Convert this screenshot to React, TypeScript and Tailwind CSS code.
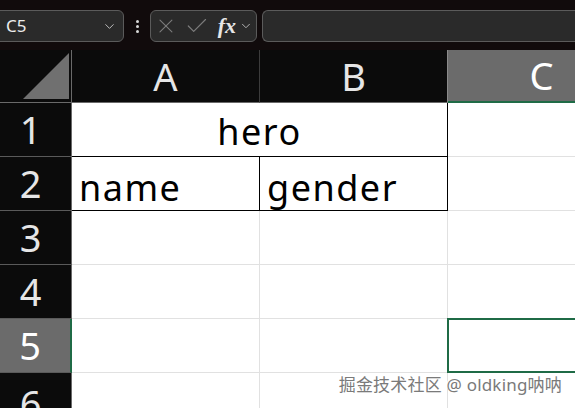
import { X, Check, ChevronDown } from 'lucide-react'

const rows = [1, 2, 3, 4, 5, 6]

function Toolbar() {
  return (
    <div className="h-[50px] bg-[#110b0c] flex items-start pt-[10px] overflow-hidden">
      {/* Name box */}
      <div className="-ml-2 w-[132px] h-[32px] shrink-0 rounded-md border border-[#5b5b5b] bg-[#2a2a2a] flex items-center justify-between pl-[13px] pr-[6px]">
        <span className="text-[17px] text-[#ececec]" style={{ fontFamily: '"Noto Sans", sans-serif' }}>C5</span>
        <ChevronDown size={15} strokeWidth={1.5} className="text-[#c4c4c4]" />
      </div>

      <div className="w-[26px] h-[32px] shrink-0 flex flex-col items-center justify-center gap-[2px]">
        <span className="w-[3px] h-[3px] rounded-full bg-[#d8d8d8]" />
        <span className="w-[3px] h-[3px] rounded-full bg-[#d8d8d8]" />
        <span className="w-[3px] h-[3px] rounded-full bg-[#d8d8d8]" />
      </div>

      {/* Formula buttons */}
      <div className="w-[107px] h-[32px] shrink-0 rounded-md border border-[#5b5b5b] bg-[#2a2a2a] flex items-center pl-[3px] pr-[3px]">
        <X size={24} strokeWidth={1.1} className="text-[#7c7c7c]" />
        <Check size={26} strokeWidth={1.1} className="text-[#7c7c7c] ml-[6px]" />
        <span className="ml-[8px] text-[22px] italic font-bold text-[#e6e6e6] leading-none" style={{ fontFamily: '"Liberation Serif", serif' }}>fx</span>
        <ChevronDown size={14} strokeWidth={1.5} className="text-[#c4c4c4] ml-[3px]" />
      </div>

      {/* Formula input */}
      <div className="ml-[5px] flex-1 h-[32px] rounded-l-md border border-r-0 border-[#5b5b5b] bg-[#2a2a2a] -mr-2" />
    </div>
  )
}

function Grid() {
  const head = '"Noto Sans", sans-serif'
  const cellText = 'text-[36px] tracking-[1.5px] text-black leading-none'
  return (
    <div
      className="grid grid-cols-[72px_188px_188px_1fr] grid-rows-[53px_54px_54px_54px_54px_54px_54px] bg-white"
      style={{ fontFamily: head }}
    >
      {/* corner */}
      <div className="bg-[#0b0b0b] border-r border-b border-[#6a6a6a] relative">
        <svg width="72" height="53" className="absolute inset-0">
          <polygon points="23,49 69,49 69,3" fill="#707070" />
        </svg>
      </div>
      <div className="bg-[#0b0b0b] border-r border-[#3c3c3c] border-b border-b-[#6a6a6a] flex items-center justify-center text-[38px] text-[#e6e6e6]">A</div>
      <div className="bg-[#0b0b0b] border-r border-[#8a8a8a] border-b border-b-[#6a6a6a] flex items-center justify-center text-[38px] text-[#e6e6e6]">B</div>
      <div className="bg-[#6b6b6b] border-b-2 border-[#1f6b46] flex items-center justify-center pl-[60px] text-[38px] text-white">C</div>

      {rows.map(r => {
        const sel = r === 5
        const rowHead = (
          <div
            key={`h${r}`}
            className={`${sel ? 'bg-[#6b6b6b] border-r-2 border-r-[#1f6b46] text-white' : 'bg-[#0b0b0b] border-r border-r-[#6a6a6a] text-[#e6e6e6]'} border-b border-b-[#5a5a5a] flex justify-center pr-[10px] text-[38px] ${r === 6 ? 'items-start pt-[2px]' : 'items-center'}`}
          >
            {r}
          </div>
        )
        if (r === 1) {
          return [
            rowHead,
            <div key="hero" className={`col-span-2 border-r border-b border-black flex items-center justify-center pt-[4px] ${cellText}`}>hero</div>,
            <div key="c1" className="border-b border-[#e1e1e1]" />,
          ]
        }
        if (r === 2) {
          return [
            rowHead,
            <div key="a2" className={`border-r border-b border-black flex items-end pl-[7px] pb-[4px] ${cellText}`}>name</div>,
            <div key="b2" className={`border-r border-b border-black flex items-end pl-[7px] pb-[4px] ${cellText}`}>gender</div>,
            <div key="c2" className="border-b border-[#e1e1e1]" />,
          ]
        }
        return [
          rowHead,
          <div key={`a${r}`} className="border-r border-b border-[#e1e1e1]" />,
          <div key={`b${r}`} className="border-r border-b border-[#e1e1e1]" />,
          <div key={`c${r}`} className="border-b border-[#e1e1e1] relative">
            {sel && <div className="absolute -left-px -top-px -right-2 -bottom-px border-2 border-[#1f6b46]" />}
          </div>,
        ]
      })}
    </div>
  )
}

export default function App() {
  return (
    <div className="w-[575px] h-[408px] overflow-hidden relative bg-white">
      <Toolbar />
      <Grid />
      <div
        className="absolute right-[13px] top-[372px] text-[17px] text-[#7a7a7a] tracking-[0.2px]"
        style={{ fontFamily: '"Noto Sans", "Noto Sans CJK SC", sans-serif', textShadow: '1px 1px 0 #fff, -1px -1px 0 #fff' }}
      >
        掘金技术社区 @ oldking呐呐
      </div>
    </div>
  )
}
